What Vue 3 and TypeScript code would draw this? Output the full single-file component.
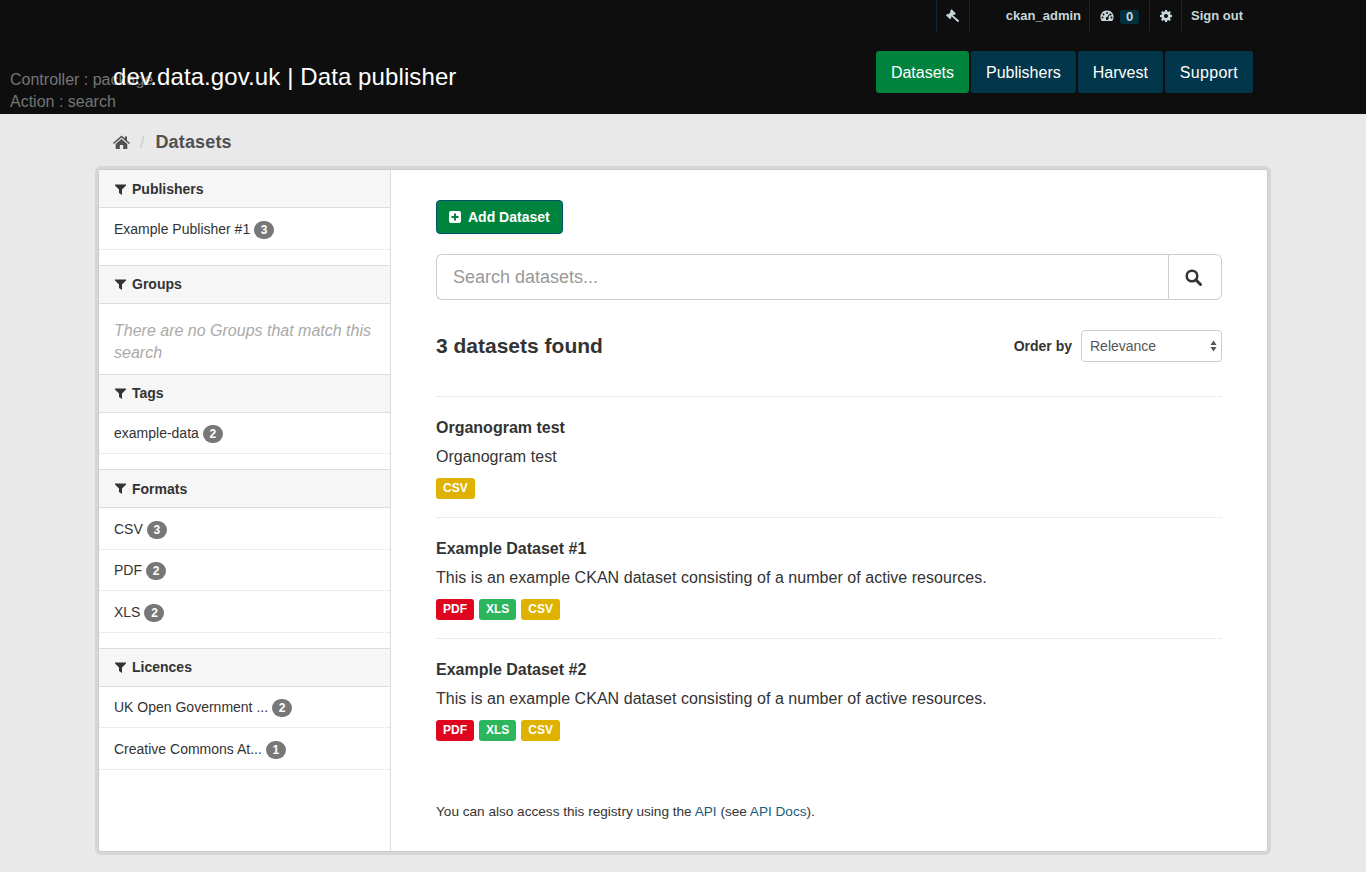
<script setup lang="ts">
interface Facet {
  title: string
  items: { label: string; count: number }[]
  empty?: string
}

interface Dataset {
  title: string
  notes: string
  formats: string[]
}

const facets: Facet[] = [
  { title: 'Publishers', items: [{ label: 'Example Publisher #1', count: 3 }] },
  { title: 'Groups', items: [], empty: 'There are no Groups that match this search' },
  { title: 'Tags', items: [{ label: 'example-data', count: 2 }] },
  {
    title: 'Formats',
    items: [
      { label: 'CSV', count: 3 },
      { label: 'PDF', count: 2 },
      { label: 'XLS', count: 2 },
    ],
  },
  {
    title: 'Licences',
    items: [
      { label: 'UK Open Government ...', count: 2 },
      { label: 'Creative Commons At...', count: 1 },
    ],
  },
]

const exampleNotes = 'This is an example CKAN dataset consisting of a number of active resources.'

const datasets: Dataset[] = [
  { title: 'Organogram test', notes: 'Organogram test', formats: ['CSV'] },
  { title: 'Example Dataset #1', notes: exampleNotes, formats: ['PDF', 'XLS', 'CSV'] },
  { title: 'Example Dataset #2', notes: exampleNotes, formats: ['PDF', 'XLS', 'CSV'] },
]

const navItems = ['Datasets', 'Publishers', 'Harvest', 'Support']
</script>

<template>
  <div class="page">
    <header class="masthead">
      <div class="debug">Controller : package<br />Action : search</div>
      <div class="account">
        <a class="acc-item acc-hammer">
          <svg width="14" height="14" viewBox="0 0 14 14"><path fill="#c6d7db" d="M5.500 0.300 9.900 4.500 8.300 6.100 7.600 5.500 6.900 6.200 13.300 11.800 11.900 13.300 5.700 7.400 4.900 8.100 5.500 8.800 4 10.300 0 6.300 1.500 4.800 2.200 5.400 4.700 2.900 4 2.200Z" /></svg>
        </a>
        <a class="acc-item acc-user">ckan_admin</a>
        <a class="acc-item acc-dash">
          <svg width="14" height="12" viewBox="0 0 14 12"><path fill="#c6d7db" fill-rule="evenodd" d="M7 .5a6.500 6.500 0 0 1 5.600 9.900c-.2.4-.6.6-1 .6H2.400c-.4 0-.8-.2-1-.6A6.500 6.500 0 0 1 7 .5ZM7 2a1 1 0 1 0 0 2 1 1 0 0 0 0-2ZM3.500 3.500a1 1 0 1 0 0 2 1 1 0 0 0 0-2ZM10.500 3.500a1 1 0 1 0 0 2 1 1 0 0 0 0-2ZM2.500 6.500a1 1 0 1 0 0 2 1 1 0 0 0 0-2ZM11.500 6.500a1 1 0 1 0 0 2 1 1 0 0 0 0-2ZM9.300 3.800 7.300 7a1.400 1.400 0 1 0 1 .5L10 4.200Z" /></svg>
          <span class="dash-count">0</span>
        </a>
        <a class="acc-item acc-gear">
          <svg width="12" height="12" viewBox="0 0 12 12"><path fill="#c6d7db" fill-rule="evenodd" d="M5 0h2l.3 1.600 1 .4L9.700 1.100l1.200 1.200L10 3.700l.4 1L12 5v2l-1.600.3-.4 1 .9 1.400-1.200 1.200L8.300 10l-1 .4L7 12H5l-.3-1.600-1-.4-1.400.9-1.200-1.200L2 8.300l-.4-1L0 7V5l1.600-.3.4-1-.9-1.400 1.200-1.200L3.700 2l1-.4ZM6 4a2 2 0 1 0 0 4 2 2 0 0 0 0-4Z" /></svg>
        </a>
        <a class="acc-item acc-out">Sign out</a>
      </div>
      <div class="brand-row">
        <div class="brand">dev.data.gov.uk | Data publisher</div>
        <nav class="main-nav">
          <a v-for="(item, i) in navItems" :key="item" class="nav-link" :class="{ active: i === 0 }">{{ item }}</a>
        </nav>
      </div>
    </header>

    <main class="content">
      <div class="crumbs">
        <svg class="home" width="17" height="14" viewBox="0 0 17 14"><path fill="#505050" d="M8.500 .6 11.800 3.500V1.500H14V5.400L17 8 16 9.100 8.500 2.600 1 9.100 0 8ZM8.500 3.900 14.300 8.900V13.400C14.300 13.700 14.100 14 13.700 14H10.200V10H6.800V14H3.300C2.900 14 2.700 13.700 2.700 13.400V8.900Z" /></svg>
        <span class="crumb-sep">/</span>
        <span class="crumb-current">Datasets</span>
      </div>

      <div class="wrapper">
        <aside class="sidebar">
          <section v-for="facet in facets" :key="facet.title" class="facet">
            <h2 class="facet-title">
              <svg width="11" height="11" viewBox="0 0 11 11"><path fill="#333" d="M0 .5h11v1L7 5.500V11L4 9V5.500L0 1.500Z" /></svg>
              {{ facet.title }}
            </h2>
            <p v-if="facet.empty" class="facet-empty">{{ facet.empty }}</p>
            <ul v-else class="facet-list">
              <li v-for="row in facet.items" :key="row.label" class="facet-row">
                {{ row.label }}
                <span class="count">{{ row.count }}</span>
              </li>
            </ul>
          </section>
        </aside>

        <div class="primary">
          <a class="add-btn">
            <svg width="12" height="12" viewBox="0 0 12 12"><path fill="#fff" fill-rule="evenodd" d="M2 0h8a2 2 0 0 1 2 2v8a2 2 0 0 1-2 2H2a2 2 0 0 1-2-2V2a2 2 0 0 1 2-2ZM5 2.500V5H2.500V7H5V9.500H7V7H9.500V5H7V2.500Z" /></svg>
            Add Dataset
          </a>

          <div class="search">
            <input class="search-input" type="text" placeholder="Search datasets..." />
            <button class="search-btn" type="button" aria-label="Search">
              <svg width="17" height="17" viewBox="0 0 17 17"><circle cx="7" cy="7" r="5.300" fill="none" stroke="#333" stroke-width="2.500" /><path d="M10.800 10.800 15.500 15.500" stroke="#333" stroke-width="3" stroke-linecap="round" /></svg>
            </button>
          </div>

          <div class="result-head">
            <h1 class="result-count">3 datasets found</h1>
            <label class="order">
              <span class="order-label">Order by</span>
              <span class="fake-select">
                Relevance
                <svg width="7" height="12" viewBox="0 0 7 12"><path fill="#555" d="M3.500 .5 6.500 5H.5ZM3.500 11.500 .5 7H6.500Z" /></svg>
              </span>
            </label>
          </div>

          <ul class="datasets">
            <li v-for="set in datasets" :key="set.title" class="dataset">
              <h3 class="dataset-title">{{ set.title }}</h3>
              <div class="dataset-notes">{{ set.notes }}</div>
              <div class="formats">
                <span v-for="f in set.formats" :key="f" class="format" :class="f.toLowerCase()">{{ f }}</span>
              </div>
            </li>
          </ul>

          <p class="api-note">
            You can also access this registry using the <a>API</a> (see <a>API Docs</a>).
          </p>
        </div>
      </div>
    </main>
  </div>
</template>

<style>
html,
body {
  margin: 0;
  background: #e9e9e9;
}
</style>

<style scoped>
.page {
  min-height: 872px;
  font-family: "Liberation Sans", Arial, sans-serif;
  font-size: 14px;
  color: #333;
  background: #e9e9e9;
}

.masthead {
  position: relative;
  height: 114px;
  background: #0e0e0e;
}

.debug {
  position: absolute;
  left: 10px;
  top: 69px;
  font-size: 16px;
  line-height: 22px;
  color: #757575;
}

.account {
  display: flex;
  justify-content: flex-end;
  height: 31px;
  padding-right: 113px;
  font-size: 13px;
  font-weight: 700;
  color: #c6d7db;
}

.acc-item {
  display: flex;
  align-items: center;
  box-sizing: border-box;
  border-left: 1px solid #0a2c38;
}

.acc-hammer {
  width: 34px;
  justify-content: center;
  border-right: 1px solid #0a2c38;
}

.acc-user {
  width: 119px;
  justify-content: flex-end;
  padding-right: 8px;
  border-left: none;
}

.acc-dash {
  width: 60px;
  padding-left: 10px;
  gap: 6px;
}

.dash-count {
  width: 19px;
  height: 14px;
  line-height: 14px;
  border-radius: 3px;
  text-align: center;
  background: #02303f;
  font-size: 13px;
  margin-top: 2px;
}

.acc-gear {
  width: 32px;
  padding-left: 10px;
}

.acc-out {
  width: 72px;
  padding-left: 9px;
  border-left: 1px solid #0a2c38;
}

.brand-row {
  display: flex;
  justify-content: space-between;
  align-items: flex-start;
  padding: 20px 113px 0 113px;
}

.brand {
  position: relative;
  margin-top: 12px;
  font-size: 24px;
  line-height: 28px;
  letter-spacing: 0.1px;
  color: #fff;
}

.main-nav {
  display: flex;
  gap: 2px;
}

.nav-link {
  height: 42px;
  line-height: 43px;
  padding: 0 15px;
  border-radius: 3px;
  font-size: 16px;
  color: #fff;
  background: #02364a;
}

.nav-link:last-child {
  letter-spacing: 0.3px;
}

.nav-link.active {
  background: #00843d;
}

.content {
  display: flex;
  flex-direction: column;
  padding: 0 98px;
}

.crumbs {
  display: flex;
  align-items: center;
  box-sizing: border-box;
  height: 52px;
  padding: 5px 0 0 15px;
  margin-bottom: 3px;
}

.home {
  margin-bottom: 2px;
}

.crumb-sep {
  margin: 0 11px 0 10px;
  font-size: 16px;
  color: #ccc;
}

.crumb-current {
  font-size: 18px;
  font-weight: 700;
  letter-spacing: 0.15px;
  color: #505050;
}

.wrapper {
  display: flex;
  box-sizing: border-box;
  width: 1170px;
  height: 683px;
  border: 1px solid #ccc;
  border-radius: 3px;
  box-shadow: 0 0 0 3px #d6d6d6;
  background: #fff;
}

.sidebar {
  box-sizing: border-box;
  flex: 0 0 292px;
  border-right: 1px solid #ddd;
}

.facet {
  padding-bottom: 15px;
}

.facet:nth-child(2) {
  padding-bottom: 0;
}

.facet-title {
  display: flex;
  align-items: center;
  gap: 6px;
  box-sizing: border-box;
  height: 39px;
  margin: 0;
  padding-left: 16px;
  border-top: 1px solid #ddd;
  border-bottom: 1px solid #ddd;
  background: #f6f6f6;
  font-size: 14px;
  font-weight: 700;
  color: #333;
}

.facet:first-child .facet-title {
  height: 38px;
  padding-top: 1px;
  border-top: none;
}

.facet-empty {
  margin: 0;
  padding: 16px 15px 10px;
  font-size: 16px;
  font-style: italic;
  line-height: 22px;
  color: #aaa;
}

.facet-list {
  margin: 0;
  padding: 0;
  list-style: none;
}

.facet-row {
  display: flex;
  align-items: center;
  gap: 4px;
  box-sizing: border-box;
  height: 41.500px;
  padding: 1px 0 0 15px;
  border-bottom: 1px dotted #ddd;
  font-size: 14px;
}

.count {
  display: inline-block;
  min-width: 20px;
  height: 18px;
  margin-top: 2px;
  line-height: 18px;
  border-radius: 9px;
  text-align: center;
  background: #777;
  color: #fff;
  font-size: 12px;
  font-weight: 700;
}

.primary {
  flex: 1;
  min-width: 0;
  padding: 30px 45px 0;
}

.add-btn {
  display: inline-flex;
  align-items: center;
  gap: 7px;
  box-sizing: border-box;
  height: 34px;
  padding: 0 12px;
  border: 1px solid #02506b;
  border-radius: 4px;
  background: #00843d;
  color: #fff;
  font-size: 14px;
  font-weight: 700;
}

.search {
  display: flex;
  height: 46px;
  margin-top: 20px;
}

.search-input {
  flex: 1;
  min-width: 0;
  box-sizing: border-box;
  padding: 0 16px;
  border: 1px solid #ccc;
  border-right: none;
  border-radius: 6px 0 0 6px;
  outline: none;
  font-family: inherit;
  font-size: 18px;
  color: #555;
  background: #fff;
}

.search-input::placeholder {
  color: #999;
  opacity: 1;
}

.search-btn {
  display: flex;
  align-items: center;
  justify-content: center;
  box-sizing: border-box;
  width: 54px;
  padding: 0 4px 0 0;
  border: 1px solid #ccc;
  border-radius: 0 6px 6px 0;
  background: #fff;
}

.result-head {
  display: flex;
  justify-content: space-between;
  align-items: center;
  height: 32px;
  margin-top: 30px;
}

.result-count {
  margin: 0;
  font-size: 21px;
  font-weight: 700;
  color: #333;
}

.order {
  display: flex;
  align-items: center;
  gap: 9px;
}

.order-label {
  font-weight: 700;
}

.fake-select {
  display: flex;
  align-items: center;
  justify-content: space-between;
  box-sizing: border-box;
  width: 141px;
  height: 32px;
  padding: 0 4px 0 8px;
  border: 1px solid #ccc;
  border-radius: 4px;
  font-size: 14px;
  color: #555;
}

.datasets {
  margin: 34px 0 0;
  padding: 0;
  list-style: none;
}

.dataset {
  box-sizing: border-box;
  height: 121px;
  padding-top: 20px;
  border-top: 1px dotted #ddd;
}

.dataset-title {
  margin: 0;
  font-size: 16px;
  line-height: 21px;
  font-weight: 700;
  color: #333;
}

.dataset-notes {
  margin-top: 8px;
  font-size: 16px;
  line-height: 22px;
  letter-spacing: 0.04px;
}

.formats {
  display: flex;
  gap: 5px;
  margin-top: 10px;
}

.format {
  height: 21px;
  line-height: 20px;
  padding: 0 7px;
  border-radius: 3px;
  color: #fff;
  font-size: 12px;
  font-weight: 700;
}

.format.pdf {
  background: #e0051e;
}

.format.xls {
  background: #2db55d;
}

.format.csv {
  background: #dfb100;
}

.api-note {
  margin: 43px 0 0;
  font-size: 13.600px;
  line-height: 20px;
}

.api-note a {
  color: #165c7d;
}
</style>
